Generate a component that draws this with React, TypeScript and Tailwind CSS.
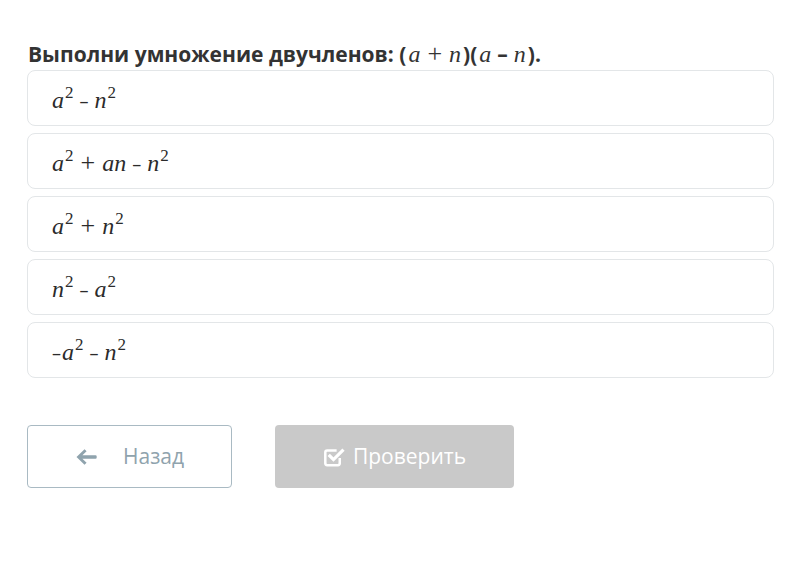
import React from 'react';

const M: React.FC<{ children: React.ReactNode }> = ({ children }) => (
  <span className="font-['Liberation_Serif',serif] italic text-[24px]">{children}</span>
);

const Op: React.FC<{ children: React.ReactNode }> = ({ children }) => (
  <span className="font-['Liberation_Serif',serif] text-[26px] mx-[7px]">{children}</span>
);

const Dash = () => <span className="font-['Open_Sans',sans-serif] mx-[6px] text-[18px]">–</span>;

const Sup: React.FC<{ children: React.ReactNode }> = ({ children }) => (
  <span className="font-['Liberation_Serif',serif] text-[17px] relative -top-[10px] ml-[1px]">{children}</span>
);

const ArrowLeft = () => (
  <svg width="22" height="18" viewBox="0 0 22 18" className="fill-[#8fa3ad]">
    <path d="M9.5 1.2 L11.6 3.3 L7.4 7.2 H20.5 A1.2 1.2 0 0 1 21.7 8.4 V9.6 A1.2 1.2 0 0 1 20.5 10.8 H7.4 L11.6 14.7 L9.5 16.8 L1.5 9 Z" />
  </svg>
);

const CheckSquare = () => (
  <svg width="22" height="22" viewBox="0 0 21 21" fill="none" className="stroke-white">
    <path d="M16 11.5 V16.5 A1.8 1.8 0 0 1 14.2 18.3 H4 A1.8 1.8 0 0 1 2.2 16.5 V6 A1.8 1.8 0 0 1 4 4.2 H13" strokeWidth="2.4" />
    <path d="M6.5 9.5 L10 13 L18.5 4.5" strokeWidth="3" strokeLinecap="square" />
  </svg>
);

const options: React.ReactNode[] = [
  <><M>a</M><Sup>2</Sup><Dash /><M>n</M><Sup>2</Sup></>,
  <><M>a</M><Sup>2</Sup><Op>+</Op><M>an</M><Dash /><M>n</M><Sup>2</Sup></>,
  <><M>a</M><Sup>2</Sup><Op>+</Op><M>n</M><Sup>2</Sup></>,
  <><M>n</M><Sup>2</Sup><Dash /><M>a</M><Sup>2</Sup></>,
  <><span className="font-['Open_Sans',sans-serif] text-[18px] mr-[1px]">–</span><M>a</M><Sup>2</Sup><Dash /><M>n</M><Sup>2</Sup></>,
];

export default function App() {
  return (
    <div className="min-h-[571px] w-[800px] bg-white pl-[27px] pr-[26px] pt-[39px] font-['Open_Sans',sans-serif] text-[#333]">
      <h1 className="text-[21px] font-bold leading-[30px] pl-[1px] whitespace-nowrap">
        Выполни умножение двучленов: (<span className="font-normal mx-[2px]"><M>a</M><Op>+</Op><M>n</M></span>)(<span className="font-normal mx-[2px]"><M>a</M></span><span className="mx-[4px]">–</span><span className="font-normal mx-[2px]"><M>n</M></span>).
      </h1>

      <div className="mt-[1px] flex flex-col gap-[7px]">
        {options.map((opt, i) => (
          <div
            key={i}
            className="h-[56px] rounded-[8px] border border-[#e3e6e8] bg-white pl-[24px] flex items-center text-[#2b2b2b]"
          >
            <span className="leading-none mt-[4px] whitespace-nowrap">{opt}</span>
          </div>
        ))}
      </div>

      <div className="mt-[47px] flex gap-[43px]">
        <button className="h-[63px] w-[205px] rounded-[4px] border border-[#a9bac3] bg-white flex items-center pl-[47px] text-[21px] text-[#8fa3ad]">
          <ArrowLeft />
          <span className="ml-[26px]">Назад</span>
        </button>
        <button className="h-[63px] w-[239px] rounded-[4px] bg-[#c9c9c9] flex items-center justify-center gap-[8px] text-[21px] text-white">
          <CheckSquare />
          <span>Проверить</span>
        </button>
      </div>
    </div>
  );
}
